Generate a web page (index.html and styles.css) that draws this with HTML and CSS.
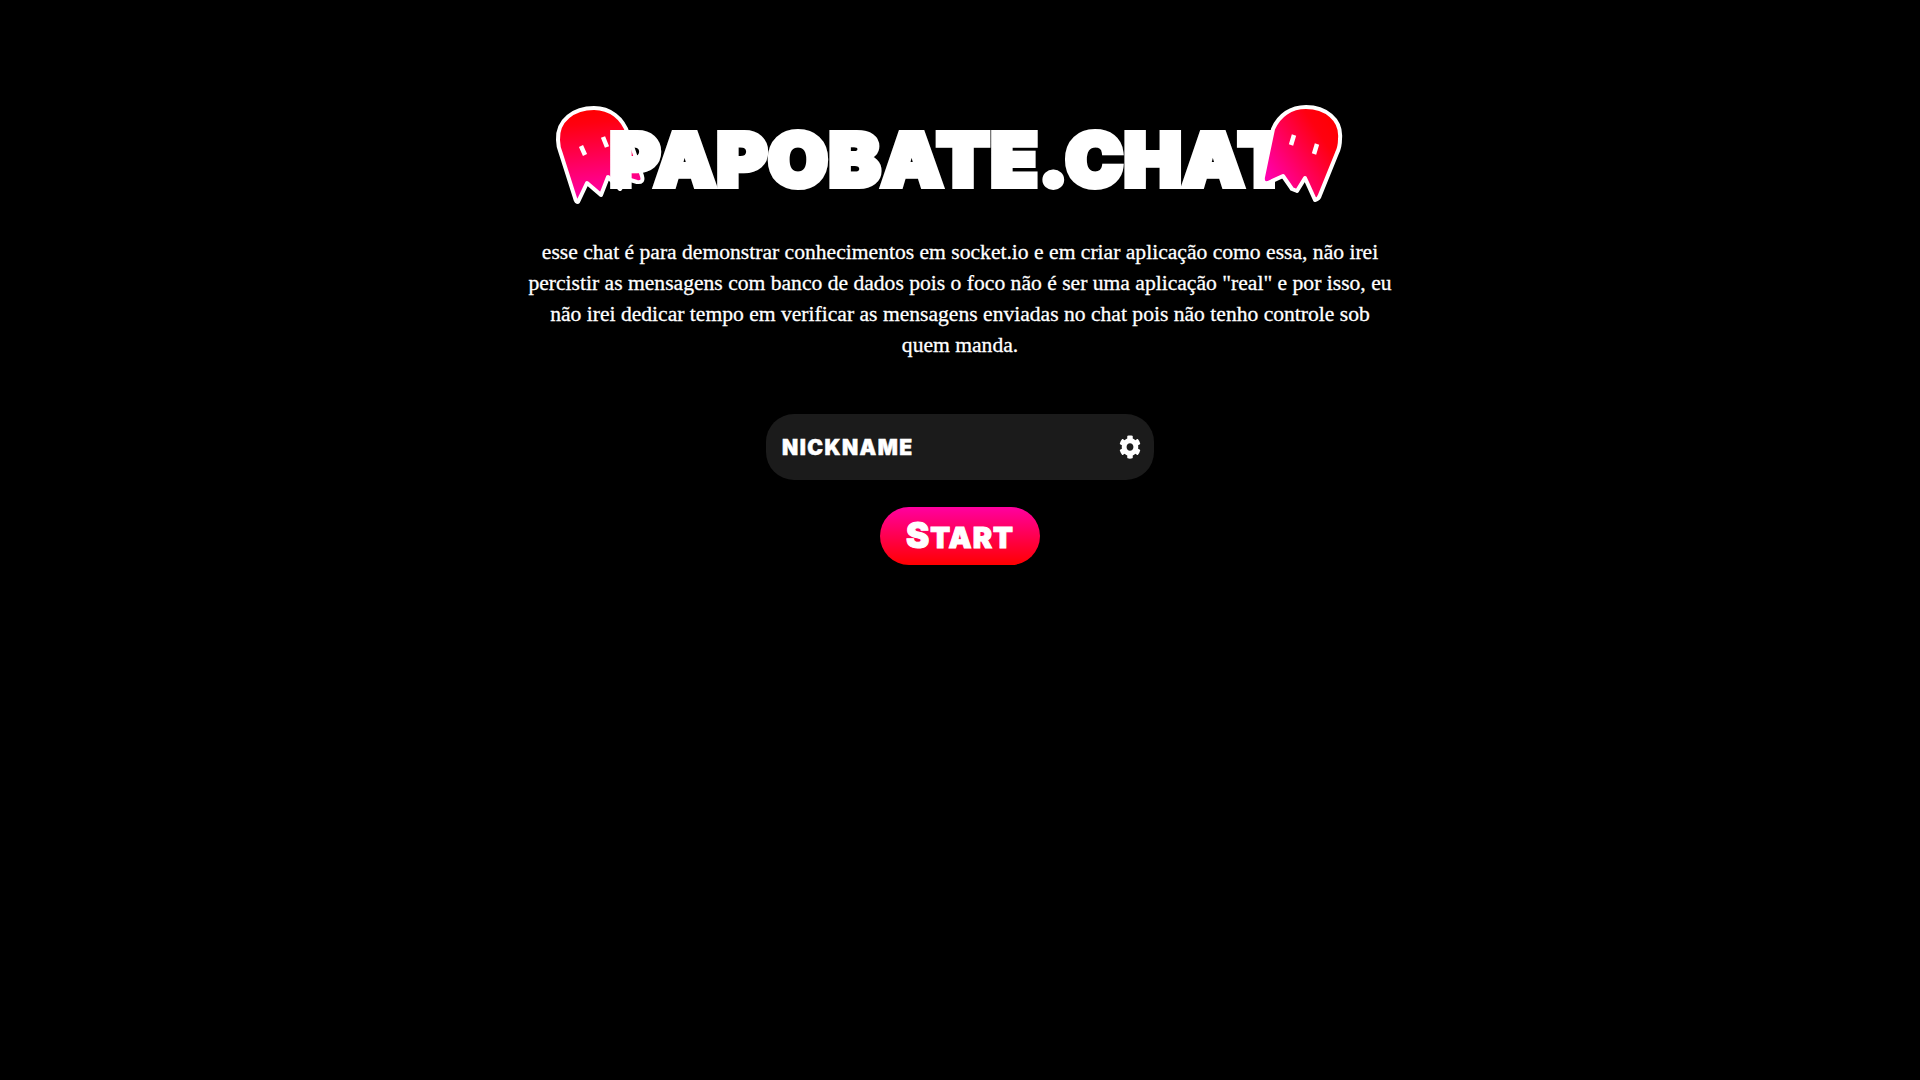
FILE: index.html
```html
<!DOCTYPE html>
<html lang="pt-BR">
<head>
<meta charset="utf-8">
<title>Papobate.chat</title>
<link rel="stylesheet" href="styles.css">
</head>
<body>
<main class="page">
  <header class="brand">
    <svg class="ghost ghost-left" viewBox="0 0 100 110" aria-hidden="true">
      <defs>
        <linearGradient id="gl" x1="0.45" y1="0" x2="0.55" y2="1"><stop offset="0" stop-color="#ff0000"/><stop offset="0.15" stop-color="#ff0010"/><stop offset="1" stop-color="#ff00b4"/></linearGradient>
      </defs>
      <path class="ghost-body" fill="url(#gl)" d="M8 40C7 20 24 8 44 8C60 8 73 18 78 34L92 76Q94 83 87 82L77 79L70 89L58 77L51 95L37 83L28 102Q26 102 25 98L11 54Q8 47 8 40Z"/>
      <path class="ghost-eye" d="M31 46L35 55M53 37L57 47"/>
    </svg>
    <h1 class="title">PAPOBATE.CHAT</h1>
    <svg class="ghost ghost-right" viewBox="0 0 100 110" aria-hidden="true">
      <defs>
        <linearGradient id="gr" x1="0.95" y1="0.1" x2="0.05" y2="0.8"><stop offset="0" stop-color="#ff0000"/><stop offset="0.25" stop-color="#ff0010"/><stop offset="1" stop-color="#ff00b4"/></linearGradient>
      </defs>
      <path class="ghost-body" fill="url(#gr)" d="M91 40C93 20 76 8 57 8C42 8 30 16 24 30L14 78Q13 85 19 84L34 77L43 90L48 92L56 79L66 101Q70 100 71 96L88 54Q91 48 91 40Z"/>
      <path class="ghost-eye" d="M45 36L42 46M68 45L65 55"/>
    </svg>
  </header>
  <p class="intro">esse chat é para demonstrar conhecimentos em socket.io e em criar aplicação como essa, não irei percistir as mensagens com banco de dados pois o foco não é ser uma aplicação "real" e por isso, eu não irei dedicar tempo em verificar as mensagens enviadas no chat pois não tenho controle sob quem manda.</p>
  <div class="field">
    <input class="nick" type="text" placeholder="NICKNAME">
    <svg class="gear" viewBox="0 0 512 512" preserveAspectRatio="none" aria-hidden="true"><path d="M487.4 315.7l-42.6-24.6c4.300-23.200 4.300-47 0-70.200l42.600-24.600c4.900-2.800 7.100-8.600 5.500-14-11.100-35.600-30-67.800-54.700-94.600-3.800-4.100-10-5.100-14.800-2.300L380.800 110c-17.900-15.400-38.500-27.300-60.800-35.100V25.800c0-5.600-3.900-10.500-9.400-11.700-36.700-8.200-74.300-7.800-109.200 0-5.500 1.200-9.400 6.100-9.400 11.700V75c-22.200 7.900-42.800 19.800-60.800 35.100L88.700 85.500c-4.900-2.800-11-1.900-14.800 2.300-24.700 26.700-43.600 58.900-54.700 94.600-1.700 5.400.6 11.200 5.500 14L67.300 221c-4.300 23.200-4.300 47 0 70.200l-42.600 24.600c-4.900 2.800-7.100 8.600-5.500 14 11.100 35.600 30 67.800 54.700 94.600 3.800 4.100 10 5.100 14.800 2.300l42.600-24.600c17.900 15.400 38.500 27.300 60.800 35.100v49.200c0 5.600 3.900 10.500 9.400 11.700 36.700 8.200 74.300 7.800 109.200 0 5.500-1.200 9.400-6.100 9.400-11.700v-49.200c22.200-7.900 42.800-19.800 60.800-35.100l42.600 24.600c4.900 2.800 11 1.900 14.800-2.300 24.700-26.700 43.600-58.900 54.700-94.600 1.500-5.500-.7-11.300-5.600-14.100zM256 336c-44.100 0-80-35.900-80-80s35.900-80 80-80 80 35.900 80 80-35.900 80-80 80z"/></svg>
  </div>
  <button class="start" type="button"><span class="start-cap">S</span>tart</button>
</main>
</body>
</html>
```
FILE: styles.css
```css
* { box-sizing: border-box; }
html, body { margin: 0; height: 100%; background: #000; }
.page {
  display: flex;
  flex-direction: column;
  align-items: center;
  padding-top: 100px;
  color: #fff;
}
.brand {
  position: relative;
  width: 800px;
  height: 110px;
  display: flex;
  justify-content: center;
  align-items: center;
}
.title {
  position: relative;
  top: 4px;
  left: -9px;
  margin: 0;
  font-family: Inter, sans-serif;
  font-weight: 900;
  font-size: 73px;
  line-height: 1;
  letter-spacing: 1.250px;
  color: #fff;
  -webkit-text-stroke: 6px #fff;
  transform: scaleX(1.05);
  white-space: nowrap;
}
.ghost { position: absolute; top: 0; width: 100px; height: 110px; }
.ghost-left { left: -10px; top: 0; }
.ghost-right { right: 11px; top: -1px; }
.ghost-body { stroke: #fff; stroke-width: 4; stroke-linejoin: round; }
.ghost-eye { stroke: #fff; stroke-width: 4.500; fill: none; }
.intro {
  width: 868px;
  margin: 27px 0 0;
  font-family: "Liberation Serif", serif;
  font-size: 21.600px;
  line-height: 31px;
  text-align: center;
  color: #fff;
  -webkit-text-stroke: 0.300px #fff;
}
.field {
  width: 388px;
  height: 66px;
  margin-top: 53px;
  padding: 0 13px 0 16px;
  display: flex;
  align-items: center;
  background: #1b1b1b;
  border-radius: 28px;
}
.nick {
  flex: 1;
  min-width: 0;
  border: 0;
  outline: 0;
  padding: 0;
  background: transparent;
  color: #fff;
  font-family: Inter, sans-serif;
  font-weight: 900;
  font-size: 21px;
  letter-spacing: 1.500px;
  -webkit-text-stroke: 0.500px #fff;
}
.nick::placeholder { color: #fff; opacity: 1; }
.gear { width: 22px; height: 24px; fill: #fff; flex: none; }
.start {
  width: 160px;
  height: 58px;
  margin-top: 27px;
  padding: 0 0 2px;
  border: 0;
  border-radius: 29px;
  background: linear-gradient(180deg, #ff00a0 0%, #ff0000 100%);
  color: #fff;
  font-family: Inter, sans-serif;
  font-weight: 900;
  font-size: 29px;
  letter-spacing: 1px;
  text-transform: uppercase;
  -webkit-text-stroke: 1px #fff;
}
.start-cap { font-size: 35px; }
```
